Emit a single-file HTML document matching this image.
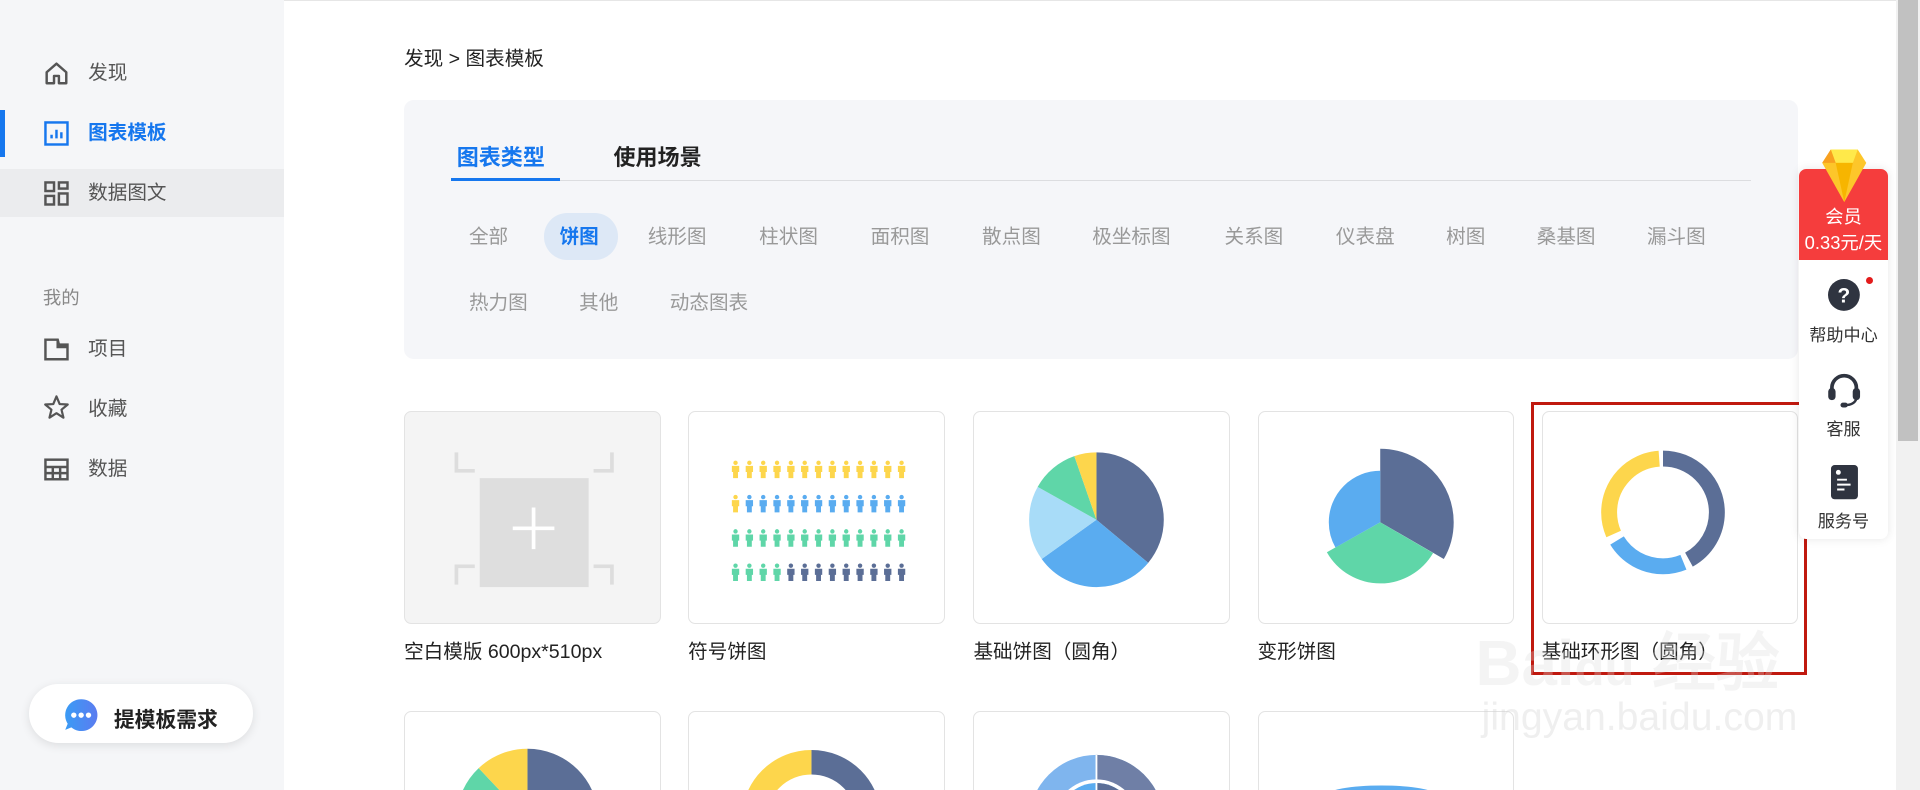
<!DOCTYPE html>
<html><head><meta charset="utf-8">
<style>
html,body{margin:0;padding:0;width:1920px;height:790px;overflow:hidden;background:#fff}
#w{zoom:1.22449;position:relative;width:1568px;height:645px;font-family:"Liberation Sans","Noto Sans CJK SC",sans-serif;overflow:hidden}
.a{position:absolute;white-space:nowrap}
.side{left:0;top:0;width:232px;height:645px;background:#f5f6f8}
.nav{font-size:16px;color:#555;line-height:20px}
.ic{position:absolute;left:35px}
.f{font-size:16px;color:#999;line-height:20px}
.card{position:absolute;width:208px;height:172px;border:1px solid #e3e3e3;border-radius:6px;background:#fff}
.lbl{font-size:16px;color:#222;line-height:20px}
.rp{font-size:14px;color:#333;text-align:center;width:73px;left:1469px}
</style></head><body><div id="w">
<div class="a" style="left:0;top:0;width:1568px;height:1px;background:#e6e6e6"></div>
<div class="a side"></div>
<div class="a" style="left:0;top:138px;width:232px;height:39px;background:#ebecee"></div>
<div class="a" style="left:0;top:90px;width:4px;height:38px;background:#1677ee"></div>

<svg class="ic" style="top:49px" width="22" height="22" viewBox="0 0 22 22"><path d="M3 10 L11 3 L19 10 V19 H13 V13 H9 V19 H3 Z" fill="none" stroke="#555" stroke-width="2" stroke-linejoin="round"/></svg>
<div class="a nav" style="left:72px;top:50px">发现</div>
<svg class="ic" style="top:98px" width="22" height="22" viewBox="0 0 22 22"><rect x="2" y="2" width="18" height="18" fill="none" stroke="#1677ee" stroke-width="2"/><path d="M7 15V12M11 15V8M15 15V10" stroke="#1677ee" stroke-width="2"/></svg>
<div class="a nav" style="left:72px;top:99px;color:#1677ee;font-weight:bold">图表模板</div>
<svg class="ic" style="top:147px" width="22" height="22" viewBox="0 0 22 22"><g fill="none" stroke="#555" stroke-width="2"><rect x="2" y="2" width="7" height="7"/><rect x="13" y="2" width="7" height="5"/><rect x="2" y="13" width="7" height="7"/><rect x="13" y="11" width="7" height="9"/></g></svg>
<div class="a nav" style="left:72px;top:148px">数据图文</div>
<div class="a" style="left:35px;top:232px;font-size:15px;color:#888">我的</div>
<svg class="ic" style="top:274px" width="22" height="22" viewBox="0 0 22 22"><path d="M2 3H12L13 7H20V19H2Z M12 3V9H20" fill="none" stroke="#555" stroke-width="2"/></svg>
<div class="a nav" style="left:72px;top:275px">项目</div>
<svg class="ic" style="top:322px" width="22" height="22" viewBox="0 0 22 22"><path d="M11 2L13.6 8.2L20.2 8.6L15.1 12.8L16.7 19.3L11 15.7L5.3 19.3L6.9 12.8L1.8 8.6L8.4 8.2Z" fill="none" stroke="#555" stroke-width="1.8" stroke-linejoin="round"/></svg>
<div class="a nav" style="left:72px;top:324px">收藏</div>
<svg class="ic" style="top:372px" width="22" height="22" viewBox="0 0 22 22"><g fill="none" stroke="#555" stroke-width="2"><rect x="2" y="3" width="18" height="16"/><path d="M2 9H20M2 14H20M8 9V19M14 9V19"/></g></svg>
<div class="a nav" style="left:72px;top:373px">数据</div>

<div class="a" style="left:24px;top:559px;width:183px;height:48px;border-radius:24px;background:#fff;box-shadow:0 2px 8px rgba(0,0,0,.1)"></div>
<svg class="a" style="left:52px;top:570px" width="28" height="28" viewBox="0 0 28 28"><defs><linearGradient id="g" x1="0" x2="1"><stop offset="0" stop-color="#3a9bf5"/><stop offset="1" stop-color="#5b7cf0"/></linearGradient></defs><path d="M14 1A13 13 0 1 1 6 24L1 26L3 21A13 13 0 0 1 14 1Z" fill="url(#g)"/><circle cx="8" cy="14" r="2.2" fill="#fff"/><circle cx="14" cy="14" r="2.2" fill="#fff"/><circle cx="20" cy="14" r="2.2" fill="#fff"/></svg>
<div class="a" style="left:93px;top:574px;font-size:17px;font-weight:bold;color:#222">提模板需求</div>

<div class="a" style="left:330px;top:34px;font-size:16px;color:#222">发现 &gt; 图表模板</div>
<div class="a" style="left:330px;top:82px;width:1138px;height:211px;border-radius:8px;background:#f5f6f9"></div>
<div class="a" style="left:373px;top:114px;font-size:18px;font-weight:bold;color:#1677ee">图表类型</div>
<div class="a" style="left:501px;top:114px;font-size:18px;font-weight:bold;color:#222">使用场景</div>
<div class="a" style="left:368px;top:147px;width:1062px;height:1px;background:#dcdde0"></div>
<div class="a" style="left:368px;top:145px;width:89px;height:3px;background:#1677ee"></div>
<div class="a" style="left:444px;top:174px;width:61px;height:38px;border-radius:19px;background:#dde8f6"></div>
<div class="a f" style="left:383px;top:184px">全部</div>
<div class="a f" style="left:457px;top:184px;color:#1677ee;font-weight:bold">饼图</div>
<div class="a f" style="left:529px;top:184px">线形图</div>
<div class="a f" style="left:620px;top:184px">柱状图</div>
<div class="a f" style="left:711px;top:184px">面积图</div>
<div class="a f" style="left:802px;top:184px">散点图</div>
<div class="a f" style="left:892px;top:184px">极坐标图</div>
<div class="a f" style="left:1000px;top:184px">关系图</div>
<div class="a f" style="left:1091px;top:184px">仪表盘</div>
<div class="a f" style="left:1181px;top:184px">树图</div>
<div class="a f" style="left:1255px;top:184px">桑基图</div>
<div class="a f" style="left:1345px;top:184px">漏斗图</div>
<div class="a f" style="left:383px;top:238px">热力图</div>
<div class="a f" style="left:473px;top:238px">其他</div>
<div class="a f" style="left:547px;top:238px">动态图表</div>

<div class="card" style="left:330px;top:336px;background:#f4f4f4">
<svg width="208" height="172" style="position:absolute;left:0;top:0"><g stroke="#ddd" stroke-width="3" fill="none"><path d="M42 33V48H57M169 33V48H154M42 141V126H57M169 141V126H154"/></g><rect x="61" y="54" width="89" height="89" fill="#dedede"/><path d="M105 78V112M88 95H122" stroke="#fff" stroke-width="3"/></svg></div>
<div class="card" style="left:562px;top:336px">
<svg width="208" height="172" style="position:absolute;left:0;top:0" id="ppl"></svg></div>
<div class="card" style="left:795px;top:336px">
<svg width="208" height="172" style="position:absolute;left:0;top:0" viewBox="0 0 208 172"><g transform="rotate(-90 100 88)" fill="none" stroke-width="55">
<circle cx="100" cy="88" r="27.5" stroke="#5b6e96" stroke-dasharray="62.2 200"/>
<circle cx="100" cy="88" r="27.5" stroke="#5aacf0" stroke-dasharray="50.1 200" stroke-dashoffset="-62.2"/>
<circle cx="100" cy="88" r="27.5" stroke="#a8dcf8" stroke-dasharray="31.1 200" stroke-dashoffset="-112.3"/>
<circle cx="100" cy="88" r="27.5" stroke="#5fd6a8" stroke-dasharray="19.9 200" stroke-dashoffset="-143.4"/>
<circle cx="100" cy="88" r="27.5" stroke="#fdd64c" stroke-dasharray="9.5 200" stroke-dashoffset="-163.3"/></g></svg></div>
<div class="card" style="left:1027px;top:336px">
<svg width="208" height="172" style="position:absolute;left:0;top:0"><g transform="rotate(-90 99 90)" fill="none">
<circle cx="99" cy="90" r="30" stroke="#5b6e96" stroke-width="60" stroke-dasharray="62.8 300"/>
<circle cx="99" cy="90" r="25" stroke="#5fd6a8" stroke-width="50" stroke-dasharray="52.4 300" stroke-dashoffset="-52.4"/>
<circle cx="99" cy="90" r="21" stroke="#5aacf0" stroke-width="42" stroke-dasharray="44 300" stroke-dashoffset="-88"/></g></svg></div>
<div class="card" style="left:1259px;top:336px">
<svg width="208" height="172" style="position:absolute;left:0;top:0"><g transform="rotate(-90 98 82)" fill="none" stroke-width="13">
<circle cx="98" cy="82" r="44" stroke="#5b6e96" stroke-dasharray="116 400"/>
<circle cx="98" cy="82" r="44" stroke="#5aacf0" stroke-dasharray="62 400" stroke-dashoffset="-121"/>
<circle cx="98" cy="82" r="44" stroke="#fdd64c" stroke-dasharray="84 400" stroke-dashoffset="-189"/></g></svg></div>
<div class="a lbl" style="left:330px;top:523px">空白模版 600px*510px</div>
<div class="a lbl" style="left:562px;top:523px">符号饼图</div>
<div class="a lbl" style="left:795px;top:523px">基础饼图（圆角）</div>
<div class="a lbl" style="left:1027px;top:523px">变形饼图</div>
<div class="a lbl" style="left:1259px;top:523px">基础环形图（圆角）</div>

<div class="card" style="left:330px;top:581px">
<svg width="208" height="172" style="position:absolute;left:0;top:0"><g transform="rotate(-90 100 88)" fill="none" stroke-width="58">
<circle cx="100" cy="88" r="29" stroke="#5b6e96" stroke-dasharray="70 300"/>
<circle cx="100" cy="88" r="29" stroke="#5aacf0" stroke-dasharray="60 300" stroke-dashoffset="-70"/>
<circle cx="100" cy="88" r="29" stroke="#5fd6a8" stroke-dasharray="30 300" stroke-dashoffset="-130"/>
<circle cx="100" cy="88" r="29" stroke="#fdd64c" stroke-dasharray="22.2 300" stroke-dashoffset="-160"/></g></svg></div>
<div class="card" style="left:562px;top:581px">
<svg width="208" height="172" style="position:absolute;left:0;top:0"><g transform="rotate(-90 100 88)" fill="none" stroke-width="20">
<circle cx="100" cy="88" r="47" stroke="#5b6e96" stroke-dasharray="150 400"/>
<circle cx="100" cy="88" r="47" stroke="#fdd64c" stroke-dasharray="100 400" stroke-dashoffset="-195"/></g></svg></div>
<div class="card" style="left:795px;top:581px">
<svg width="208" height="172" style="position:absolute;left:0;top:0"><circle cx="100" cy="90" r="55" fill="#7fb5ee"/><path d="M100 35A55 55 0 0 1 155 90H100Z" fill="#6f7fa6"/><circle cx="100" cy="90" r="35" fill="#fff"/><circle cx="100" cy="90" r="32" fill="#5aacf0"/><path d="M100 58A32 32 0 0 1 132 90H100Z" fill="#5b6e96"/><path d="M100 35V90" stroke="#fff" stroke-width="1.5"/></svg></div>
<div class="card" style="left:1027px;top:581px">
<svg width="208" height="172" style="position:absolute;left:0;top:0"><ellipse cx="100" cy="68" rx="45" ry="8" fill="#5aacf0"/></svg></div>

<div class="a" style="left:1250px;top:328px;width:221px;height:218px;border:3px solid #c0190f"></div>

<div class="a" style="left:1469px;top:138px;width:73px;height:302px;background:#fff;border-radius:6px;box-shadow:0 0 8px rgba(0,0,0,.1)"></div>
<div class="a" style="left:1469px;top:138px;width:73px;height:74px;background:#f53d3d;border-radius:6px 6px 0 0"></div>
<svg class="a" style="left:1487px;top:120px" width="38" height="46" viewBox="0 0 38 46"><path d="M8 2H30L37 13L19 45L1 13Z" fill="#fdc62a"/><path d="M8 2H30L26 13H12Z" fill="#ffe94a"/><path d="M12 13H26L19 45Z" fill="#f7b500"/><path d="M1 13L8 2L12 13Z" fill="#f8a020"/></svg>
<div class="a rp" style="top:166px;color:#fff;font-size:15px">会员</div>
<div class="a rp" style="top:187px;color:#fff;font-size:15px">0.33元/天</div>
<svg class="a" style="left:1493px;top:228px" width="26" height="26"><circle cx="13" cy="13" r="13" fill="#2f3440"/><text x="13" y="19" text-anchor="middle" font-family="Liberation Sans" font-weight="bold" font-size="17" fill="#fff">?</text></svg>
<div class="a" style="left:1524px;top:226px;width:6px;height:6px;border-radius:3px;background:#e31b1b"></div>
<div class="a rp" style="top:262px">帮助中心</div>
<svg class="a" style="left:1492px;top:304px" width="28" height="30" viewBox="0 0 28 30"><path d="M4 16V13A10 10 0 0 1 24 13V16" fill="none" stroke="#2f3440" stroke-width="3"/><rect x="1" y="13" width="6" height="10" rx="3" fill="#2f3440"/><rect x="21" y="13" width="6" height="10" rx="3" fill="#2f3440"/><path d="M24 22Q22 27 15 27" fill="none" stroke="#2f3440" stroke-width="2"/><rect x="11" y="25" width="6" height="4" rx="2" fill="#2f3440"/></svg>
<div class="a rp" style="top:339px">客服</div>
<svg class="a" style="left:1495px;top:380px" width="22" height="28" viewBox="0 0 22 28"><rect width="22" height="28" rx="3" fill="#2f3440"/><circle cx="6" cy="6" r="2" fill="#fff"/><path d="M5 12H13M5 16H16M5 20H11" stroke="#fff" stroke-width="1.6"/></svg>
<div class="a rp" style="top:414px">服务号</div>

<div class="a" style="left:1548px;top:0;width:20px;height:645px;background:#f1f1f1"></div>
<div class="a" style="left:1550px;top:0;width:16px;height:360px;background:#c1c1c1"></div>

<div class="a" style="left:1205px;top:500px;font-size:52px;font-weight:bold;color:rgba(220,220,220,.3);font-family:'Liberation Sans',sans-serif">Bai<span style="font-size:40px">du</span> 经验</div>
<div class="a" style="left:1210px;top:568px;font-size:32px;color:rgba(210,210,210,.35)">jingyan.baidu.com</div>
</div>
<script>
var s=document.getElementById('ppl'),h='';
for(var r=0;r<4;r++){for(var i=0;i<13;i++){var c;
if(r==0)c='#fdd64c';else if(r==1)c=i<1?'#fdd64c':'#5aacf0';else if(r==2)c='#5fd6a8';else c=i<4?'#5fd6a8':'#5b6e96';
var x=35+i*11.3,y=40+r*28;
h+='<g fill="'+c+'"><circle cx="'+(x+3)+'" cy="'+(y+1.5)+'" r="1.8"/><path d="M'+x+' '+(y+4)+'h6v5h-1v5h-4v-5h-1z"/></g>';}}
s.innerHTML=h;
</script>
</body></html>
